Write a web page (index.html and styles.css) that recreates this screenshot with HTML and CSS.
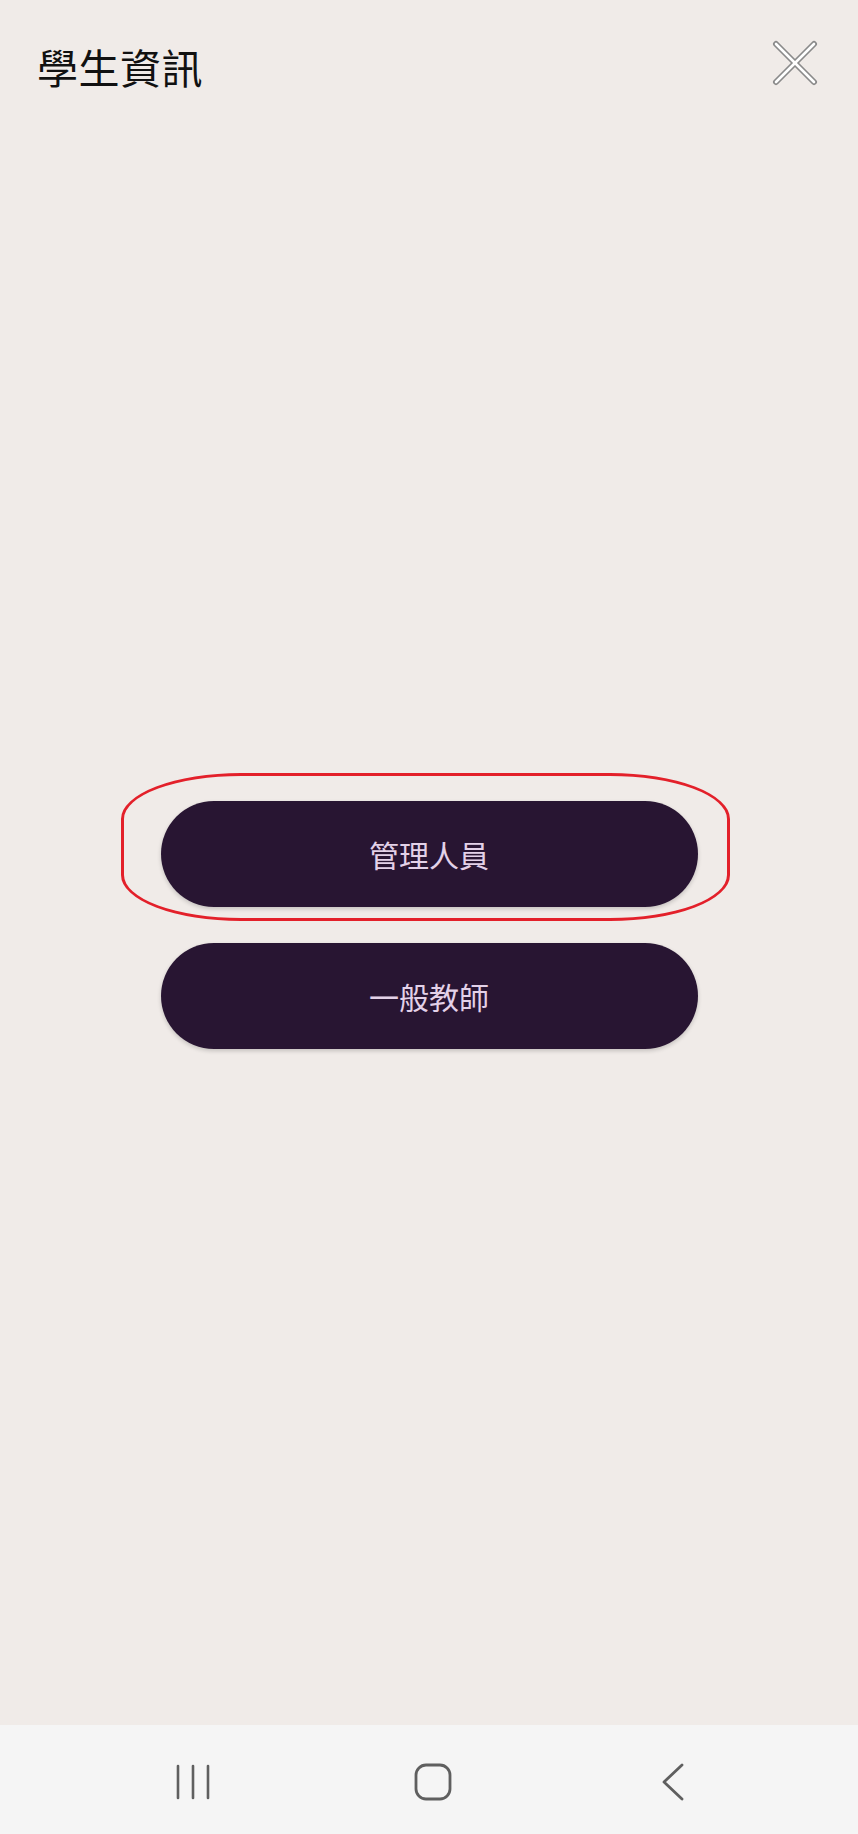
FILE: index.html
```html
<!DOCTYPE html>
<html lang="zh-Hant">
<head>
<meta charset="utf-8">
<title>學生資訊</title>
<link rel="stylesheet" href="styles.css">
</head>
<body>
<div class="screen">
  <header class="top-bar">
    <h1 class="title">學生資訊</h1>
    <button class="close" aria-label="關閉">
      <svg width="46" height="46" viewBox="0 0 46 46">
        <g stroke-linecap="round">
          <line x1="4" y1="4" x2="42" y2="42" stroke="#8a8a8a" stroke-width="6"/>
          <line x1="42" y1="4" x2="4" y2="42" stroke="#8a8a8a" stroke-width="6"/>
          <line x1="4" y1="4" x2="42" y2="42" stroke="#ffffff" stroke-width="2.6"/>
          <line x1="42" y1="4" x2="4" y2="42" stroke="#ffffff" stroke-width="2.6"/>
        </g>
      </svg>
    </button>
  </header>
  <main class="content">
    <div class="choices">
      <div class="choice-wrap">
        <button class="choice">管理人員</button>
        <span class="mark"></span>
      </div>
      <div class="choice-wrap">
        <button class="choice">一般教師</button>
      </div>
    </div>
  </main>
  <nav class="nav-bar">
    <span class="nav-btn">
      <svg width="36" height="38" viewBox="0 0 36 38">
        <g stroke="#5f5f5f" stroke-width="2.6" stroke-linecap="round">
          <line x1="3" y1="3" x2="3" y2="35"/>
          <line x1="18" y1="3" x2="18" y2="35"/>
          <line x1="33" y1="3" x2="33" y2="35"/>
        </g>
      </svg>
    </span>
    <span class="nav-btn">
      <svg width="38" height="38" viewBox="0 0 38 38">
        <rect x="2" y="2" width="34" height="34" rx="10" fill="none" stroke="#5f5f5f" stroke-width="2.8"/>
      </svg>
    </span>
    <span class="nav-btn">
      <svg width="24" height="40" viewBox="0 0 24 40">
        <polyline points="21,3 3,20 21,37" fill="none" stroke="#5f5f5f" stroke-width="2.8" stroke-linecap="round" stroke-linejoin="round"/>
      </svg>
    </span>
  </nav>
</div>
</body>
</html>
```

FILE: styles.css
```css
html, body {
  margin: 0;
  padding: 0;
}

body {
  background: #f0ebe8;
  font-family: "Noto Sans CJK TC", "Noto Sans", sans-serif;
}

.screen {
  width: 858px;
  height: 1834px;
  display: flex;
  flex-direction: column;
  overflow: hidden;
}

.top-bar {
  height: 125px;
  box-sizing: border-box;
  padding: 39px 40px 0 37px;
  display: flex;
  justify-content: space-between;
  align-items: flex-start;
}

.title {
  margin: 0;
  font-size: 41px;
  font-weight: 400;
  line-height: 54px;
  color: #111111;
  letter-spacing: 0.5px;
}

.close {
  border: 0;
  background: none;
  padding: 0;
  margin: 1px 0 0 0;
  width: 46px;
  height: 46px;
  display: block;
}

.close svg {
  display: block;
}

.content {
  flex: 1;
  display: flex;
  align-items: center;
  justify-content: center;
}

.choices {
  display: flex;
  flex-direction: column;
  gap: 36px;
}

.choice-wrap {
  position: relative;
}

.choice {
  display: block;
  width: 537px;
  height: 106px;
  border: 0;
  border-radius: 53px;
  background: #281532;
  color: #e3d1e8;
  font-family: "Noto Sans CJK TC", "Noto Sans", sans-serif;
  font-size: 30px;
  font-weight: 400;
  letter-spacing: 0;
  box-shadow: 0 2px 4px rgba(0, 0, 0, 0.18);
  padding: 0;
}

.mark {
  position: absolute;
  left: -40px;
  top: -28px;
  width: 609px;
  height: 148px;
  box-sizing: border-box;
  border: 3.5px solid #e3202a;
  border-radius: 120px / 46px;
  pointer-events: none;
}

.nav-bar {
  height: 109px;
  background: #f5f5f5;
  display: flex;
  align-items: center;
  justify-content: center;
  padding-left: 8px;
}

.nav-btn {
  width: 240px;
  display: flex;
  justify-content: center;
  align-items: center;
  margin-top: 4px;
}

.nav-btn svg {
  display: block;
}
```
